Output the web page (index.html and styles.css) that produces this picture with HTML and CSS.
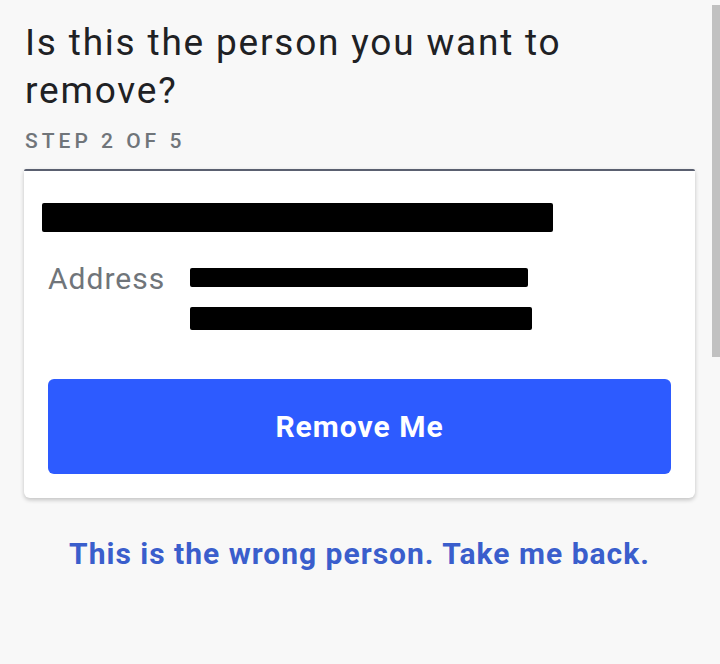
FILE: index.html
```html
<!DOCTYPE html>
<html lang="en">
<head>
    <meta charset="UTF-8">
    <meta name="viewport" content="width=device-width, initial-scale=1.0">
    <title>Remove Listing</title>
    <link rel="stylesheet" href="styles.css">
</head>
<body>
    <main class="page">
        <h1 class="title">Is this the person you want to remove?</h1>
        <p class="step">STEP 2 OF 5</p>

        <div class="card">
            <div class="name"><span class="redact redact-name"></span></div>
            <div class="address">
                <span class="label">Address</span>
                <div class="lines">
                    <span class="redact redact-line1"></span>
                    <span class="redact redact-line2"></span>
                </div>
            </div>
            <button class="btn">Remove Me</button>
        </div>

        <a href="#" class="back">This is the wrong person. Take me back.</a>
    </main>
    <div class="scrollbar"></div>
</body>
</html>
```

FILE: styles.css
```css
* {
    margin: 0;
    padding: 0;
    box-sizing: border-box;
}

body {
    font-family: Roboto, 'Liberation Sans', sans-serif;
    background: #f8f8f8;
    color: #202124;
    min-height: 100vh;
    overflow: hidden;
}

.page {
    padding: 19px 25px 0 24px;
}

.title {
    max-width: 610px;
    font-size: 37px;
    font-weight: 400;
    line-height: 48px;
    letter-spacing: 1.8px;
    padding-left: 1px;
}

.step {
    margin-top: 14px;
    font-size: 21px;
    line-height: 24px;
    font-weight: 500;
    letter-spacing: 4px;
    color: #70757a;
    padding-left: 1px;
}

.card {
    margin-top: 16px;
    background: #ffffff;
    border-top: 2px solid #5a6070;
    border-radius: 2px 2px 6px 6px;
    box-shadow: 0 2px 4px rgba(0, 0, 0, 0.22);
    padding: 32px 24px 24px;
}

.redact {
    display: block;
    background: #000;
    border-radius: 2px;
}

.redact-name {
    width: 511px;
    height: 29px;
    margin-left: -6px;
}

.address {
    display: grid;
    grid-template-columns: 142px 1fr;
    margin-top: 28px;
    font-size: 30px;
    line-height: 38px;
    letter-spacing: 1px;
}

.label {
    color: #70757a;
}

.lines {
    display: flex;
    flex-direction: column;
}

.redact-line1 {
    width: 338px;
    height: 19px;
    margin-top: 8px;
}

.redact-line2 {
    width: 342px;
    height: 23px;
    margin-top: 20px;
}

.btn {
    display: block;
    width: 100%;
    height: 95px;
    margin-top: 49px;
    border: none;
    border-radius: 6px;
    background: #2d5bff;
    color: #ffffff;
    font-family: Roboto, 'Liberation Sans', sans-serif;
    font-size: 30px;
    font-weight: 700;
    letter-spacing: 1px;
    cursor: pointer;
}

.back {
    display: block;
    margin-top: 38px;
    text-align: center;
    font-size: 30px;
    line-height: 36px;
    font-weight: 700;
    letter-spacing: 1px;
    color: #3a5ecc;
    text-decoration: none;
}

.scrollbar {
    position: absolute;
    top: 5px;
    right: 0;
    width: 8px;
    height: 352px;
    background: #c1c1c1;
}
```
